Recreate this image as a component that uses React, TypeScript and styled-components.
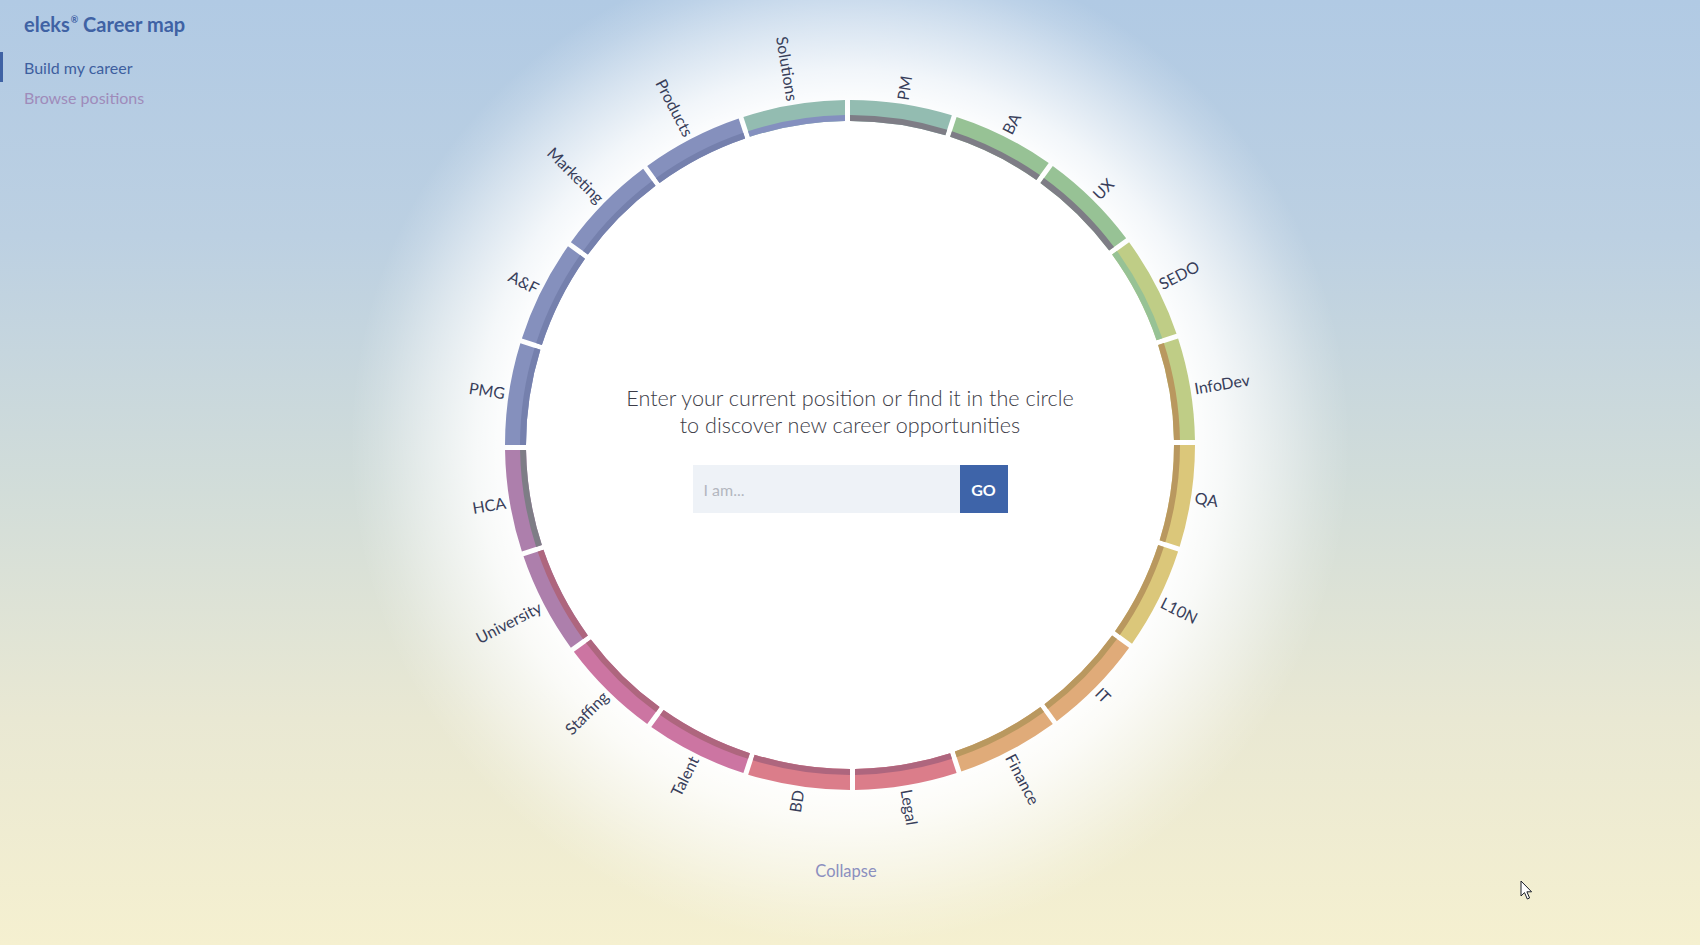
import React from 'react';
import styled, { createGlobalStyle } from 'styled-components';

const GlobalStyle = createGlobalStyle`
  html, body {
    margin: 0;
    padding: 0;
  }
  body {
    font-family: Lato, "Open Sans", sans-serif;
  }
`;

type Segment = { label: string; color: string; stripe: string };

const segments: Segment[] = [
  { label: 'PM', color: '#93bcb1', stripe: '#7e7d86' },
  { label: 'BA', color: '#97c295', stripe: '#7e7d86' },
  { label: 'UX', color: '#97c295', stripe: '#7e7d86' },
  { label: 'SEDO', color: '#bfcd86', stripe: '#97c295' },
  { label: 'InfoDev', color: '#bfcd86', stripe: '#b9985f' },
  { label: 'QA', color: '#dbc77a', stripe: '#b9985f' },
  { label: 'L10N', color: '#dbc77a', stripe: '#b9985f' },
  { label: 'IT', color: '#e0ab79', stripe: '#b9985f' },
  { label: 'Finance', color: '#e0ab79', stripe: '#b9985f' },
  { label: 'Legal', color: '#db7d8a', stripe: '#ae667e' },
  { label: 'BD', color: '#db7d8a', stripe: '#ae667e' },
  { label: 'Talent', color: '#cc75a2', stripe: '#ae667e' },
  { label: 'Staffing', color: '#cc75a2', stripe: '#ae667e' },
  { label: 'University', color: '#ad7fac', stripe: '#ae667e' },
  { label: 'HCA', color: '#ad7fac', stripe: '#7e7d86' },
  { label: 'PMG', color: '#8590bd', stripe: '#7580ad' },
  { label: 'A&F', color: '#8590bd', stripe: '#7580ad' },
  { label: 'Marketing', color: '#8590bd', stripe: '#7580ad' },
  { label: 'Products', color: '#8590bd', stripe: '#7580ad' },
  { label: 'Solutions', color: '#93bcb1', stripe: '#8490bf' },
];

const OUTER = 345;
const INNER = 324;
const STRIPE = 330;
const GAP = 5;
const LABEL_R = 349;

const pt = (r: number, deg: number) => {
  const a = (deg * Math.PI) / 180;
  return `${(r * Math.sin(a)).toFixed(2)} ${(-r * Math.cos(a)).toFixed(2)}`;
};

// annular sector, gap cut off at the clockwise end
const arc = (a0: number, a1: number, r0: number, r1: number) => {
  const e1 = a1 - (GAP / r1) * (180 / Math.PI);
  const e0 = a1 - (GAP / r0) * (180 / Math.PI);
  return `M${pt(r1, a0)} A${r1} ${r1} 0 0 1 ${pt(r1, e1)} L${pt(r0, e0)} A${r0} ${r0} 0 0 0 ${pt(r0, a0)} Z`;
};

const Wheel = () => {
  const step = 360 / segments.length;
  return (
    <WheelSvg width={900} height={820} viewBox="-450 -420 900 820">
      {segments.map((s, i) => {
        const a0 = i * step;
        const a1 = a0 + step;
        const mid = a0 + step / 2 - 0.4;
        const right = mid < 180;
        return (
          <g key={s.label}>
            <path d={arc(a0, a1, INNER, OUTER)} fill={s.color} />
            <path d={arc(a0, a1, INNER, STRIPE)} fill={s.stripe} />
            <Label
              transform={
                right
                  ? `rotate(${mid - 90}) translate(${LABEL_R} 0)`
                  : `rotate(${mid + 90}) translate(${-LABEL_R} 0)`
              }
              textAnchor={right ? 'start' : 'end'}
              dominantBaseline="central"
            >
              {s.label}
            </Label>
          </g>
        );
      })}
    </WheelSvg>
  );
};

const App = () => {
  return (
    <Page>
      <GlobalStyle />
      <Sidebar>
        <Logo>
          eleks<sup>®</sup> Career map
        </Logo>
        <Nav>
          <NavItem $active>Build my career</NavItem>
          <NavItem>Browse positions</NavItem>
        </Nav>
      </Sidebar>

      <MapColumn>
        <WheelArea>
          <Wheel />
          <CenterPanel>
            <Intro>
              Enter your current position or find it in the circle
              <br />
              to discover new career opportunities
            </Intro>
            <SearchForm onSubmit={(e) => e.preventDefault()}>
              <SearchInput type="text" placeholder="I am..." />
              <GoButton type="submit">GO</GoButton>
            </SearchForm>
          </CenterPanel>
        </WheelArea>
        <Collapse>Collapse</Collapse>
      </MapColumn>

      <Cursor width="14" height="21" viewBox="0 0 14 21">
        <path d="M1 1 L1 16 L4.5 12.6 L7.3 19 L9.6 18 L6.9 11.8 L11.6 11.8 Z" fill="#fff" stroke="#1b1f2a" strokeWidth="1" strokeLinejoin="round" />
      </Cursor>
    </Page>
  );
};

const Page = styled.div`
  position: relative;
  width: 1700px;
  height: 945px;
  overflow: hidden;
  display: grid;
  grid-template-columns: 1fr 900px 1fr;
  background:
    radial-gradient(
      circle 500px at 850px 445px,
      #ffffff 0%,
      #ffffff 67%,
      rgba(255, 255, 255, 0.82) 75%,
      rgba(255, 255, 255, 0.48) 85%,
      rgba(255, 255, 255, 0.16) 94%,
      rgba(255, 255, 255, 0) 100%
    ),
    linear-gradient(
      to bottom,
      #b1cae4 0%,
      #bcd0e2 25%,
      #d2ddd9 52%,
      #e9e8d3 76%,
      #f5f0d0 100%
    );
`;

const Sidebar = styled.aside`
  padding-top: 12px;
  display: flex;
  flex-direction: column;
`;

const Logo = styled.h1`
  margin: 0 0 16px 24px;
  font-size: 20px;
  line-height: 24px;
  font-weight: 700;
  color: #3f62a4;

  sup {
    font-size: 9px;
    vertical-align: top;
    position: relative;
    top: -4px;
    margin-left: 1px;
  }
`;

const Nav = styled.nav`
  display: flex;
  flex-direction: column;
`;

const NavItem = styled.a<{ $active?: boolean }>`
  display: flex;
  align-items: center;
  height: 30px;
  padding-left: 21px;
  border-left: 3px solid ${(p) => (p.$active ? '#3f62a4' : 'transparent')};
  font-size: 16px;
  color: ${(p) => (p.$active ? '#3e5f9f' : '#9f8bba')};
  text-decoration: none;
  cursor: pointer;
`;

const MapColumn = styled.main`
  display: flex;
  flex-direction: column;
  align-items: center;
  padding-top: 25px;
`;

const WheelArea = styled.div`
  display: grid;
  justify-items: center;

  & > * {
    grid-area: 1 / 1;
  }
`;

const WheelSvg = styled.svg`
  display: block;
`;

const Label = styled.text`
  font-family: Lato, "Open Sans", sans-serif;
  font-size: 16px;
  fill: #383e5a;
`;

const CenterPanel = styled.div`
  align-self: start;
  margin-top: 360px;
  display: flex;
  flex-direction: column;
  align-items: center;
`;

const Intro = styled.p`
  margin: 0 0 26px;
  font-size: 21.6px;
  font-weight: 300;
  line-height: 27px;
  color: #3c3c47;
  text-align: center;
`;

const SearchForm = styled.form`
  display: flex;
`;

const SearchInput = styled.input`
  width: 267px;
  height: 48px;
  box-sizing: border-box;
  border: none;
  outline: none;
  padding: 0 11px;
  background: #eef2f7;
  font-family: Lato, sans-serif;
  font-size: 16px;
  color: #333;

  &::placeholder {
    color: #b3b7bf;
  }
`;

const GoButton = styled.button`
  width: 48px;
  height: 48px;
  border: none;
  background: #3e64a9;
  color: #fff;
  font-family: Lato, sans-serif;
  font-weight: 700;
  font-size: 16px;
  cursor: pointer;
`;

const Collapse = styled.div`
  margin: 16px 8px 0 0;
  font-size: 16.5px;
  color: #8b8fbf;
  cursor: pointer;
`;

const Cursor = styled.svg`
  position: absolute;
  left: 1520px;
  top: 880px;
`;

export default App;
